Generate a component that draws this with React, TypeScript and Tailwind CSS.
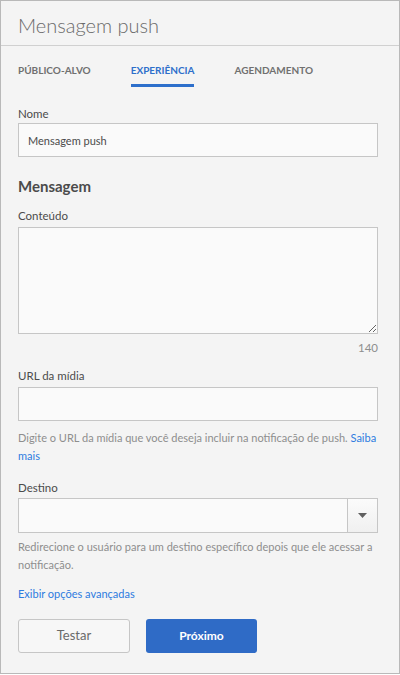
import { ChangeEvent, useState } from 'react';

const tabs = ['PÚBLICO-ALVO', 'EXPERIÊNCIA', 'AGENDAMENTO'];

export default function App() {
    const [nome, setNome] = useState('Mensagem push');
    const [conteudo, setConteudo] = useState('');
    const [url, setUrl] = useState('');
    const active = 'EXPERIÊNCIA';

    return (
        <div className="h-[675px] w-[400px] bg-white" style={{ fontFamily: 'Lato, "Open Sans", sans-serif' }}>
            <div className="flex h-[674px] flex-col border border-[#b9b9b9] bg-[#f4f4f4]">
                <div className="flex h-[45px] items-center border-b border-[#d0d0d0] px-[17px] pt-[4px]">
                    <h1 className="text-[20px] font-light text-[#6a6a6a]">Mensagem push</h1>
                </div>
                <div className="flex gap-[40px] px-[17px] pt-[17px]">
                    {tabs.map(tab => (
                        <div key={tab} className={`border-b-[3px] pb-[6px] text-[10px] font-bold leading-[15px] ${tab === active ? 'border-[#2d6fcb] text-[#2d6fcb]' : 'border-transparent text-[#707070]'}`}>{tab}</div>
                    ))}
                </div>

                <div className="flex flex-col px-[17px] pt-[19px]">
                    <label className="h-[16px] text-[11.5px] leading-[16px] text-[#4b4b4b]">Nome</label>
                    <input value={nome} onChange={(e: ChangeEvent<HTMLInputElement>) => setNome(e.target.value)} className="mt-[1px] h-[34px] w-[360px] border border-[#c6c6c6] bg-[#fafafa] px-[9px] text-[11px] text-[#4b4b4b] outline-none" />

                    <h2 className="mt-[19px] h-[20px] text-[15px] font-bold leading-[20px] text-[#4b4b4b]">Mensagem</h2>

                    <label className="mt-[12px] h-[16px] text-[11.5px] leading-[16px] text-[#4b4b4b]">Conteúdo</label>
                    <textarea value={conteudo} onChange={(e: ChangeEvent<HTMLTextAreaElement>) => setConteudo(e.target.value)} className="mt-[3px] block h-[107px] w-[360px] border border-[#c6c6c6] bg-[#fafafa] px-[9px] py-[6px] text-[11px] outline-none" />
                    <div className="mt-[6px] h-[16px] w-[360px] text-right text-[11.5px] leading-[16px] text-[#8e8e8e]">140</div>

                    <label className="mt-[12px] h-[16px] text-[11.5px] leading-[16px] text-[#4b4b4b]">URL da mídia</label>
                    <input value={url} onChange={(e: ChangeEvent<HTMLInputElement>) => setUrl(e.target.value)} className="mt-[3px] h-[34px] w-[360px] border border-[#c6c6c6] bg-[#fafafa] px-[9px] text-[11px] outline-none" />
                    <p className="mt-[8px] w-[362px] text-[11px] leading-[18px] text-[#8e8e8e]">
                        Digite o URL da mídia que você deseja incluir na notificação de push. <a className="text-[#2d7be0]">Saiba mais</a>
                    </p>

                    <label className="mt-[15px] h-[16px] text-[11.5px] leading-[16px] text-[#4b4b4b]">Destino</label>
                    <div className="mt-[2px] flex h-[35px] w-[360px] border border-[#c6c6c6] bg-[#fafafa]">
                        <div className="flex-1" />
                        <button className="flex w-[30px] items-center justify-center border-l border-[#c6c6c6] bg-gradient-to-b from-[#fbfbfb] to-[#f0f0f0]">
                            <svg width="9" height="5" viewBox="0 0 9 5"><path d="M0 0h9L4.5 5z" fill="#606060" /></svg>
                        </button>
                    </div>
                    <p className="mt-[5px] w-[362px] text-[11px] leading-[18px] text-[#8e8e8e]">
                        Redirecione o usuário para um destino específico depois que ele acessar a notificação.
                    </p>

                    <a className="mt-[11px] h-[18px] text-[11px] leading-[18px] text-[#2d7be0]">Exibir opções avançadas</a>

                    <div className="mt-[16px] flex gap-[16px]">
                        <button className="h-[34px] w-[112px] rounded-[3px] border border-[#c6c6c6] bg-[#f7f7f7] text-[13px] text-[#6a6a6a]">Testar</button>
                        <button className="h-[34px] w-[111px] rounded-[3px] bg-[#2f6bc6] text-[12px] font-bold text-white">Próximo</button>
                    </div>
                </div>
            </div>
        </div>
    );
}
